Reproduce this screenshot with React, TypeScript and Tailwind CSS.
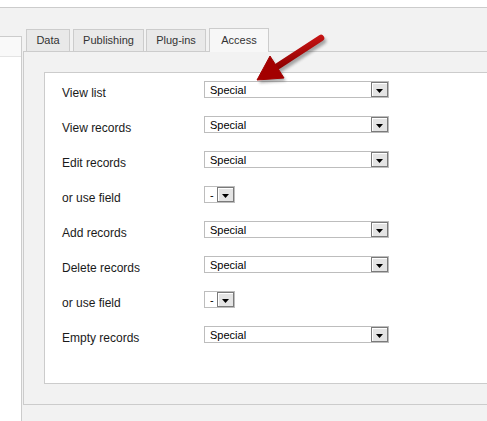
import React from 'react';

const rows: { label: string; small?: boolean }[] = [
  { label: 'View list' },
  { label: 'View records' },
  { label: 'Edit records' },
  { label: 'or use field', small: true },
  { label: 'Add records' },
  { label: 'Delete records' },
  { label: 'or use field', small: true },
  { label: 'Empty records' },
];

const tabs = [
  { name: 'Data', cls: 'w-[44px] ml-0', active: false },
  { name: 'Publishing', cls: 'w-[71px] ml-[3px]', active: false },
  { name: 'Plug-ins', cls: 'w-[60px] ml-[2px]', active: false },
  { name: 'Access', cls: 'w-[60px] ml-[3px]', active: true },
];

const DropButton: React.FC = () => (
  <div className="absolute right-0 top-0 bottom-0 w-[17px] border border-[#7a7a7a] bg-[#e4e4e4] shadow-[inset_1px_1px_0_#ffffff] flex items-end justify-center pb-[3px]">
    <svg width="7" height="4" viewBox="0 0 7 4">
      <polygon points="0,0 7,0 3.5,4" fill="#000" />
    </svg>
  </div>
);

const Select: React.FC<{ small?: boolean }> = ({ small }) => (
  <div
    className={`relative border border-[#bdbdbd] bg-white text-[11px] leading-[15px] text-black pl-[5px] pt-[1px] ${
      small ? 'w-[31px] h-[17px]' : 'w-[185px] h-[17px]'
    }`}
  >
    {small ? '-' : 'Special'}
    <DropButton />
  </div>
);

const Arrow: React.FC = () => (
  <svg
    className="absolute left-0 top-0 pointer-events-none"
    width="487"
    height="421"
    viewBox="0 0 487 421"
  >
    <defs>
      <filter id="blur" x="-20%" y="-20%" width="140%" height="140%">
        <feGaussianBlur stdDeviation="1.6" />
      </filter>
      <linearGradient id="red" x1="0" y1="0" x2="0.3" y2="1">
        <stop offset="0" stopColor="#d41a1a" />
        <stop offset="1" stopColor="#8e0000" />
      </linearGradient>
    </defs>
    <g transform="translate(2,3)" filter="url(#blur)" opacity="0.45">
      <line x1="321" y1="38" x2="278" y2="66" stroke="#444" strokeWidth="6.5" strokeLinecap="round" />
      <polygon points="257,80 284,78 270,56" fill="#444" />
    </g>
    <line x1="321" y1="38" x2="278" y2="66" stroke="url(#red)" strokeWidth="6.5" strokeLinecap="round" />
    <polygon points="257,80 284,78 270,56" fill="#a30000" stroke="#a30000" strokeWidth="1" strokeLinejoin="round" />
  </svg>
);

const App: React.FC = () => {
  return (
    <div className="relative w-[487px] h-[421px] overflow-hidden bg-white font-['Liberation_Sans',Arial,sans-serif]">
      <div className="h-[7px] bg-white"></div>
      <div className="flex h-[414px] border-t border-[#cccccc] bg-[#f2f2f2]">
        <div className="w-[22px] mt-[28px] border-t border-r border-[#cccccc] bg-white flex flex-col">
          <div className="h-[20px] bg-[#f9f9f9] border-b border-[#e4e4e4]"></div>
        </div>
        <div className="flex-1 ml-[1px] pt-[20px] overflow-hidden">
          <div className="flex items-end pl-[3px] h-[23px]">
            {tabs.map((t) => (
              <div
                key={t.name}
                className={`${t.cls} flex items-center justify-center border-t border-l border-r border-[#cccccc] text-[11px] text-[#333333] ${
                  t.active ? 'bg-[#f7f7f7] relative z-10 h-[24px] -mb-px pb-px' : 'bg-[#e9e9e9] h-[22px]'
                }`}
              >
                {t.name}
              </div>
            ))}
          </div>
          <div className="border-t border-l border-b border-[#cccccc] bg-[#f2f2f2] pt-[20px] pb-[20px] pl-[20px]">
            <div className="border-t border-l border-b border-[#cccccc] bg-white pt-[8px] pb-[22px] pl-[17px]">
              {rows.map((r, i) => (
                <div key={i} className="flex h-[35px]">
                  <div className="w-[142px] pt-[5px] text-[12px] leading-[14px] text-[#1a1a1a]">
                    {r.label}
                  </div>
                  <Select small={r.small} />
                </div>
              ))}
            </div>
          </div>
        </div>
      </div>
      <Arrow />
    </div>
  );
};

export default App;
